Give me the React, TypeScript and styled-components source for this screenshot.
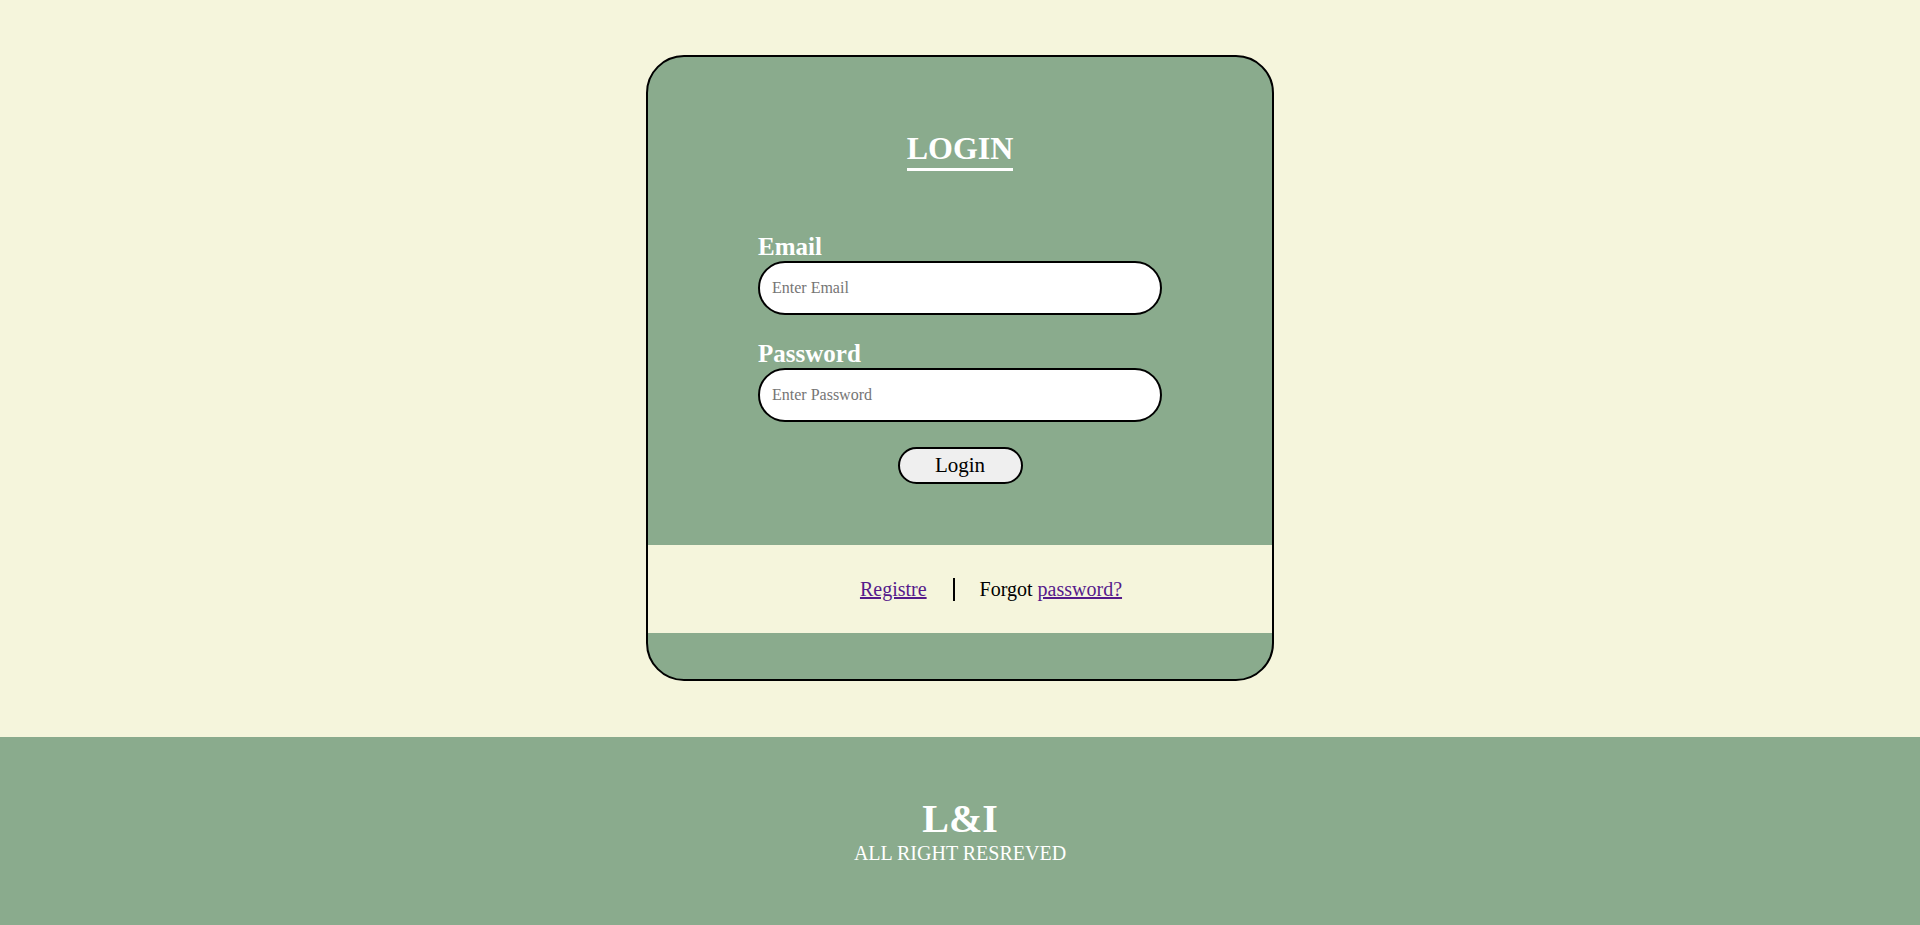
import React, { FC } from "react";
import styled, { createGlobalStyle } from "styled-components";

const BEIGE = "#f5f5dc";
const GREEN = "#8aab8d";

const GlobalStyle = createGlobalStyle`
	html, body {
		margin: 0;
		padding: 0;
		background: ${BEIGE};
		font-family: "Liberation Serif", "Times New Roman", serif;
	}
`;

const Page = styled.div`
	display: flex;
	flex-direction: column;
	padding-top: 55px;
`;

const Card = styled.div`
	box-sizing: border-box;
	width: 628px;
	margin: 0 auto 56px;
	border: 2px solid #000;
	border-radius: 38px;
	overflow: hidden;
	background: ${GREEN};
	display: flex;
	flex-direction: column;
`;

const FormArea = styled.div`
	display: flex;
	flex-direction: column;
	align-items: center;
	padding: 73px 0 61px;
`;

const Title = styled.h1`
	margin: 0;
	display: inline-block;
	font-size: 32px;
	line-height: 37px;
	font-weight: bold;
	color: #fff;
	padding-bottom: 1px;
	border-bottom: 3px solid #fff;
`;

const Form = styled.form`
	width: 404px;
	margin-top: 61px;
	display: flex;
	flex-direction: column;
`;

const Label = styled.label<{ first?: boolean }>`
	display: block;
	margin-top: ${(p) => (p.first ? "0" : "24px")};
	font-size: 25px;
	line-height: 29px;
	font-weight: bold;
	color: #fff;
`;

const Input = styled.input`
	box-sizing: border-box;
	width: 100%;
	height: 54px;
	padding: 0 12px;
	border: 2px solid #000;
	border-radius: 27px;
	background: #fff;
	font-family: "Liberation Serif", "Times New Roman", serif;
	font-size: 16px;
	outline: none;

	&::placeholder {
		color: #757575;
		font-family: "Liberation Serif", "Times New Roman", serif;
	}
`;

const Button = styled.button`
	align-self: center;
	box-sizing: border-box;
	width: 125px;
	height: 37px;
	margin-top: 25px;
	padding: 0;
	border: 2px solid #000;
	border-radius: 19px;
	background: #efefef;
	color: #000;
	font-family: "Liberation Serif", "Times New Roman", serif;
	font-size: 21px;
	cursor: pointer;
`;

const LinkBand = styled.div`
	height: 88px;
	background: ${BEIGE};
	display: flex;
	align-items: center;
	justify-content: center;
	padding-left: 62px;
	font-size: 20px;
	line-height: 23px;
	color: #000;

	a {
		color: #551a8b;
		text-decoration: underline;
	}
`;

const Divider = styled.span`
	display: inline-block;
	width: 2px;
	height: 23px;
	margin: 0 25px 0 26px;
	background: #000;
`;

const BottomStrip = styled.div`
	height: 46px;
`;

const Footer = styled.footer`
	background: ${GREEN};
	padding: 59px 0 60px;
	text-align: center;
	color: #fff;
`;

const Brand = styled.div`
	font-size: 40px;
	line-height: 46px;
	font-weight: bold;
`;

const Rights = styled.div`
	font-size: 20px;
	line-height: 23px;
`;

const App: FC = () => {
	return (
		<>
			<GlobalStyle />
			<Page>
				<Card>
					<FormArea>
						<Title>LOGIN</Title>
						<Form onSubmit={(e) => e.preventDefault()}>
							<Label first htmlFor="email">
								Email
							</Label>
							<Input id="email" type="email" placeholder="Enter Email" />
							<Label htmlFor="password">Password</Label>
							<Input id="password" type="password" placeholder="Enter Password" />
							<Button type="submit">Login</Button>
						</Form>
					</FormArea>
					<LinkBand>
						<a href="#register">Registre</a>
						<Divider />
						<span>
							Forgot <a href="#forgot">password?</a>
						</span>
					</LinkBand>
					<BottomStrip />
				</Card>
				<Footer>
					<Brand>L&amp;I</Brand>
					<Rights>ALL RIGHT RESREVED</Rights>
				</Footer>
			</Page>
		</>
	);
};

export default App;
